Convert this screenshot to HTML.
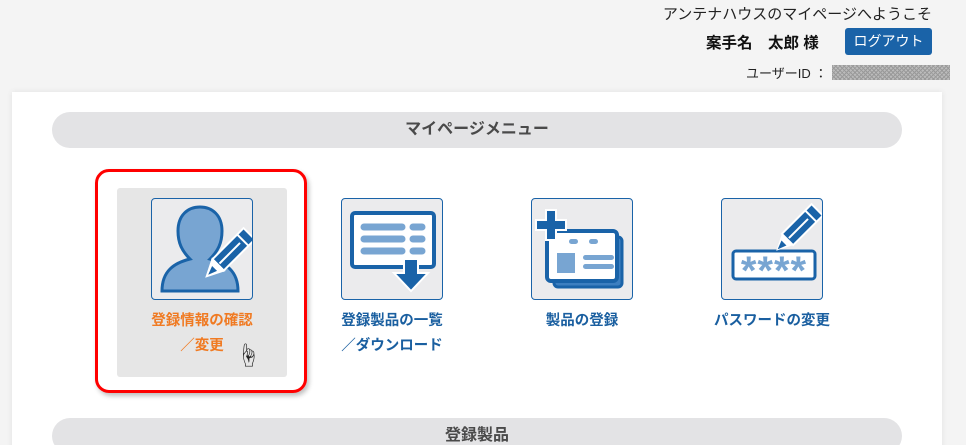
<!DOCTYPE html>
<html><head><meta charset="utf-8"><style>
*{margin:0;padding:0;box-sizing:border-box}
html,body{width:966px;height:445px;overflow:hidden}
body{background:#f4f4f4;font-family:"Liberation Sans","Noto Sans CJK JP",sans-serif;position:relative}
.abs{position:absolute}
.panel{left:12px;top:92px;width:930px;height:360px;background:#fff;box-shadow:0 0 6px rgba(0,0,0,.08)}
.pill{left:52px;width:850px;height:36px;background:#e3e3e5;border-radius:18px;text-align:center;font-weight:bold;font-size:16px;color:#4a4a4a;line-height:36px}
.box{width:102px;height:102px;background:#ebebed;border:1px solid #1a63a8;border-radius:4px;top:198px}
.box svg{display:block}
.lab{font-size:14.5px;font-weight:bold;color:#1a5fa0;text-align:center;line-height:25px;width:170px;top:309px}
</style></head><body>
<div class="abs" style="right:34px;top:3px;font-size:15px;color:#222">アンテナハウスのマイページへようこそ</div>
<div class="abs" style="left:706px;top:31px;font-size:15.5px;font-weight:bold;color:#111">案手名　太郎 様</div>
<div class="abs" style="left:845px;top:28px;width:87px;height:27px;background:#1a63a8;border-radius:3px;color:#fff;font-size:14px;text-align:center;line-height:27px">ログアウト</div>
<div class="abs" style="left:746px;top:63px;font-size:13px;color:#222">ユーザーID ：</div>
<div class="abs" style="left:832px;top:65px;width:118px;height:15px;background-color:#bbb;background-image:repeating-linear-gradient(45deg,#999 0 1px,transparent 1px 3px),repeating-linear-gradient(-45deg,#999 0 1px,transparent 1px 3px)"></div>
<div class="abs panel"></div>
<div class="abs pill" style="top:112px">マイページメニュー</div>
<div class="abs" style="left:95px;top:169px;width:212px;height:224px;border:3px solid #f00;border-radius:14px;box-shadow:2px 3px 5px rgba(0,0,0,.25)"></div>
<div class="abs" style="left:117px;top:188px;width:170px;height:189px;background:#e6e6e6;border-radius:3px"></div>

<div class="abs box" style="left:151px"><svg width="100" height="100" viewBox="0 0 100 100">
<path d="M10 92 C10 72 22 64 38 60 C30 52 26 44 26 32 C26 16 36 8 48 8 C60 8 70 16 70 32 C70 44 66 52 58 60 C74 64 86 72 86 92 Z" fill="#78a5d2" stroke="#1a63a8" stroke-width="3"/>
<g transform="translate(76,56) rotate(45)"><rect x="-8" y="-30" width="16" height="44" fill="#1a63a8" stroke="#fff" stroke-width="2"/><path d="M-8 14 L8 14 L0 30 Z" fill="#fff" stroke="#fff" stroke-width="2"/><path d="M-3.5 19 L3.5 19 L0 28Z" fill="#1a63a8"/><line x1="-8" y1="-21" x2="8" y2="-21" stroke="#fff" stroke-width="2"/><line x1="0" y1="-17" x2="0" y2="12" stroke="#fff" stroke-width="2"/></g>
</svg></div>
<div class="abs box" style="left:341px"><svg width="100" height="100" viewBox="0 0 100 100">
<rect x="10" y="14" width="82" height="54" rx="3" fill="#fff" stroke="#1a63a8" stroke-width="4"/>
<g stroke="#78a5d2" stroke-width="7" stroke-linecap="round"><line x1="22" y1="28" x2="60" y2="28"/><line x1="22" y1="40" x2="60" y2="40"/><line x1="22" y1="52" x2="60" y2="52"/><line x1="71" y1="28" x2="80" y2="28"/><line x1="71" y1="40" x2="80" y2="40"/><line x1="71" y1="52" x2="80" y2="52"/></g>
<path d="M62 60 L76 60 L76 74 L86 74 L69 92 L52 74 L62 74 Z" fill="#1a63a8" stroke="#fff" stroke-width="2"/>
</svg></div>
<div class="abs box" style="left:531px"><svg width="100" height="100" viewBox="0 0 100 100">
<rect x="22" y="38" width="68" height="50" rx="4" fill="#3d7fc0" stroke="#1a63a8" stroke-width="3"/>
<rect x="15" y="32" width="70" height="50" rx="4" fill="#fff" stroke="#1a63a8" stroke-width="4"/>
<g fill="#78a5d2"><rect x="25" y="54" width="18" height="20"/><rect x="51" y="56" width="31" height="5" rx="2.5"/><rect x="51" y="65" width="31" height="5" rx="2.5"/><rect x="37" y="40" width="9" height="5" rx="2.5"/><rect x="57" y="40" width="9" height="5" rx="2.5"/></g>
<path d="M14 11 H24 V21 H34 V31 H24 V41 H14 V31 H4 V21 H14 Z" fill="#1a63a8" stroke="#fff" stroke-width="2"/>
</svg></div>
<div class="abs box" style="left:721px"><svg width="100" height="100" viewBox="0 0 100 100">
<rect x="11" y="52" width="82" height="28" rx="3" fill="#fff" stroke="#1a63a8" stroke-width="3"/>
<text x="52" y="85" text-anchor="middle" font-family="Liberation Sans,sans-serif" font-weight="bold" font-size="40" fill="#78a5d2" letter-spacing="1">****</text>
<g transform="translate(74,32) rotate(45)"><rect x="-8" y="-30" width="16" height="42" fill="#1a63a8" stroke="#fff" stroke-width="2"/><path d="M-8 12 L8 12 L0 28 Z" fill="#fff"/><path d="M-3.5 17 L3.5 17 L0 26Z" fill="#1a63a8"/><line x1="-8" y1="-21" x2="8" y2="-21" stroke="#fff" stroke-width="2"/><line x1="0" y1="-17" x2="0" y2="10" stroke="#fff" stroke-width="2"/></g>
</svg></div>

<div class="abs lab" style="left:117px;color:#f07a22">登録情報の確認<br>／変更</div>
<div class="abs" style="left:236px;top:336px;font-size:24px;color:#222">☝</div>
<div class="abs lab" style="left:307px">登録製品の一覧<br>／ダウンロード</div>
<div class="abs lab" style="left:497px">製品の登録</div>
<div class="abs lab" style="left:687px">パスワードの変更</div>
<div class="abs pill" style="top:418px">登録製品</div>
</body></html>
